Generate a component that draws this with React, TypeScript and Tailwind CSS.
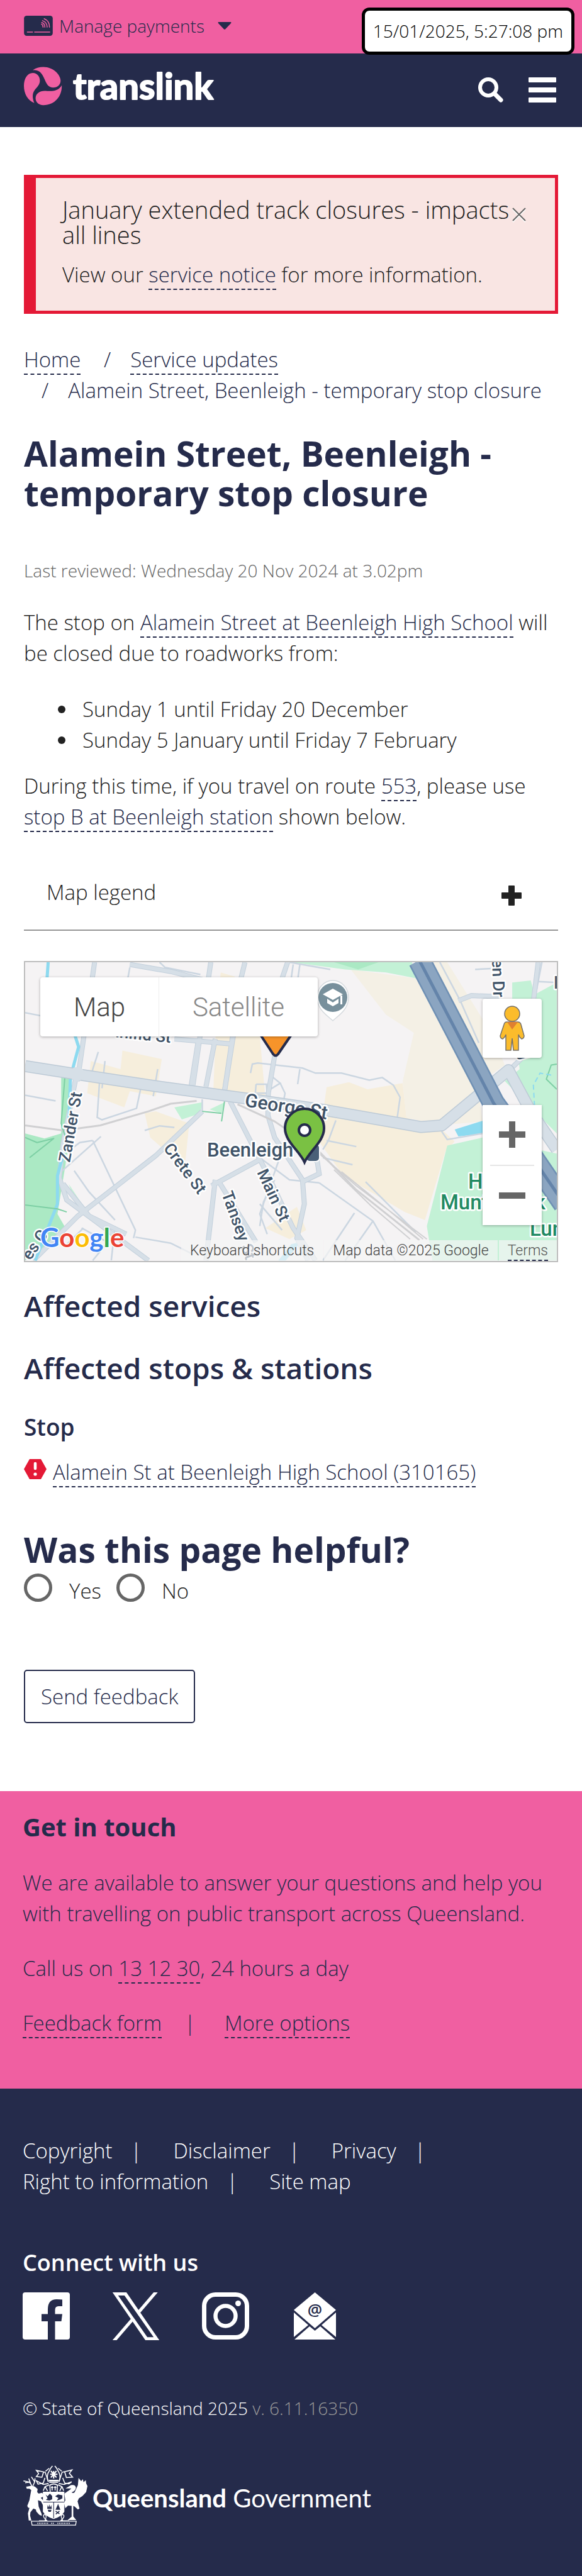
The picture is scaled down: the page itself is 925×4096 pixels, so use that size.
import type { ReactNode } from 'react'

const link = 'border-b-2 border-dashed border-[#252b4b] text-[#252b4b]'

function A({ children }: { children: ReactNode }) {
  return (
    <a href="#" className={link}>
      {children}
    </a>
  )
}

function TranslinkLogo() {
  return (
    <svg viewBox="0 0 330 62" className="h-[62px] w-[330px] overflow-visible" role="img" aria-label="translink">
      <g transform="scale(0.2615) translate(-54 -348)" fill="#f05fa1">
        <path d="M108 369C125 357 147 350 172 350C235 350 277 400 277 433C277 458 258 475 232 475C205 475 193 455 183 432C170 400 155 370 120 369Z" />
        <path d="M117 569C80 555 54 515 54 465C54 420 75 386 108 386C135 386 151 408 151 432C151 455 138 468 122 487C105 508 103 535 117 569Z" />
        <path d="M284 461C287 530 240 582 172 582C143 582 125 562 125 540C125 512 150 495 180 495C210 496 260 505 284 461Z" />
      </g>
      <text
        x="78"
        y="52"
        className="font-['Lato'] text-[58px] font-bold"
        fill="#fff"
        stroke="#fff"
        strokeWidth="2"
        strokeLinejoin="round"
      >
        translink
      </text>
    </svg>
  )
}

function CardIcon() {
  return (
    <svg viewBox="0 0 174 122" className="h-8 w-[46px]" aria-hidden="true">
      <rect width="174" height="122" rx="16" fill="#252b4b" />
      <g stroke="#f05fa1" strokeWidth="6" fill="none" strokeLinecap="round">
        <path d="M20 99H52M64 99H156" />
        <path d="M106 51Q116 56 115 69M107 41Q127 48 126 69M112 30Q140 40 140 69M122 18Q156 32 154 69" />
      </g>
    </svg>
  )
}

const lanes = [
  '68,300 110,315', '68,710 150,738', '430,49 445,75 540,110', '350,75 345,125', '780,49 890,85',
  '790,60 785,125', '808,60 803,125', '265,495 245,610', '283,540 275,675', '425,580 413,715',
  '268,650 262,820 275,832 368,775 380,670', '675,600 680,555 695,550 815,575 850,600 920,600 995,635 1030,622 1060,660 1078,720 1070,825',
  '808,580 802,655', '690,655 718,655 720,700 688,700 690,655', '720,690 755,650 735,620', '755,650 768,700 762,760',
  '390,885 430,862 470,870', '250,935 365,1380 360,1420', '250,935 215,945 190,980', '272,915 165,1090',
  '200,1085 240,1190 310,1330', '905,835 885,935 870,980', '880,935 960,965', '870,1020 950,1055',
  '860,1145 1005,1335 1065,1531', '955,1295 870,1531', '1005,1335 930,1531', '700,1020 780,1130 860,1145',
  '750,1040 700,1300 720,1400', '740,1130 710,1240 700,1360', '700,1250 760,1380', '365,1415 460,1445 520,1500',
  '220,1370 290,1440 250,1531', '225,1370 175,1460', '310,1360 300,1531', '1185,49 1240,240 1290,450',
  '1280,85 1325,80', '1190,890 1205,930 1300,900', '1270,500 1290,560', '985,1140 1120,1390',
  '545,730 545,790', '1440,240 1460,49', '1450,145 1500,150',
]

const streets = [
  '255,49 215,560 208,640', '350,60 460,95 545,135', '568,49 520,660', '660,49 650,125 605,690', '630,400 605,690',
  '775,49 760,130', '535,430 515,665', '580,430 555,668', '740,515 723,700 722,810 740,920 815,1130 820,1250 800,1420 830,1531',
  '470,430 625,455', '620,740 720,1100 790,1370 850,1531', '545,790 420,1010 210,1310 90,1531',
  '570,1160 700,1030', '590,1140 690,1440', '580,1130 555,1531', '205,620 170,950 160,1120 180,1230 400,1531',
  '170,1150 240,1310 340,1400', '815,1140 860,1100 855,1040 800,960', '1235,240 1270,215 1345,220',
  '1370,590 1420,500 1450,49',
]

function MapDrawing() {
  return (
    <svg
      viewBox="0 0 845 475"
      preserveAspectRatio="xMinYMin slice"
      className="absolute inset-0 h-full w-full"
      role="img"
      aria-label="Map of Beenleigh"
    >
      <rect width="845" height="475" fill="#f5f3f4" />
      <g transform="scale(0.59 0.32) translate(-68 -49)">
        <g fill="#f6eedc">
          <path d="M945 85L1125 130L1290 700L1300 840L1180 860L1095 820L1085 640L1115 400L1040 310Z" fill="#f4f0e5" />
          <path d="M330 488L436 530L420 715L350 690L335 770L235 700L245 540L325 580Z" />
          <path d="M595 100L632 120L700 415L715 725L575 680L585 250Z" />
          <path d="M880 670L940 645L990 680L1085 650L1095 820L1190 880L1225 940L1200 990L1145 1330L1090 1290L925 1110L860 940Z" />
          <path d="M390 800L420 790L510 850L500 1030L475 1045L430 960L405 920Z" />
          <path d="M715 1370L800 1265L825 1380L780 1425Z" />
          <path d="M1165 49L1205 49L1330 420L1360 560L1290 650L1200 300Z" fill="#f4f0e5" />
        </g>
        <g fill="#c3f1d6">
          <path d="M785 49H1110L1125 130L1040 100L930 85Z" />
          <path d="M1380 150L1430 140L1440 210L1500 150V1531H1165L1150 1360L1205 960L1300 920L1500 1000V900L1360 640L1400 580L1380 300Z" />
          <path d="M165 620L190 610L185 960L155 1300L180 1380L68 1531V900L120 925L165 900Z" fill="#abe9c4" />
          <path d="M470 770L545 745L540 800L490 830ZM565 780L605 745L597 800Z" />
          <path d="M185 1150L235 1290L215 1300Z" />
        </g>
        <path d="M900 49H1020L965 85Z" fill="#abe9c4" />
        <path d="M1225 880L1330 820L1350 890L1235 915Z" fill="#8ddaf0" />
        <path d="M785 1450L810 1440L770 1531H750Z" fill="#8ddaf0" />

        <g fill="none" stroke="#cbd6e1" strokeWidth="2.5">
          {lanes.map((p) => (
            <polyline key={p} points={p} vectorEffect="non-scaling-stroke" />
          ))}
        </g>
        <g fill="none" stroke="#c3d0dc" strokeWidth="8">
          {streets.map((p) => (
            <polyline key={p} points={p} vectorEffect="non-scaling-stroke" />
          ))}
        </g>
        <g fill="none" stroke="#d6dfe7" strokeWidth="6">
          {streets.map((p) => (
            <polyline key={p} points={p} vectorEffect="non-scaling-stroke" />
          ))}
        </g>
        <g fill="none" strokeLinejoin="round">
          <path d="M130 49L125 180M200 400L212 470L190 620L185 900L155 1110V1250L95 1531" stroke="#8ddaf0" strokeWidth="5" vectorEffect="non-scaling-stroke" />
          <path d="M68 860L170 885L270 860L400 790L460 752L530 738" stroke="#d0d0d2" strokeWidth="3" vectorEffect="non-scaling-stroke" />
          <path d="M640 755L740 840L860 990L960 1180L1130 1430" stroke="#d0d0d2" strokeWidth="3" vectorEffect="non-scaling-stroke" />
          <path d="M860 1000L960 1160L1150 1425M900 1080L1000 1260L1105 1425M920 1090L1040 1270L1140 1425" stroke="#d0d0d2" strokeWidth="2" vectorEffect="non-scaling-stroke" />
          <path d="M175 620L165 850L180 940M68 920L100 945L145 925L80 1020M68 1255L155 1275L180 1290" stroke="#7dcfa4" strokeWidth="2" vectorEffect="non-scaling-stroke" />
          <path d="M605 740L597 840M545 790L597 800M1500 555L1485 560L1472 630L1500 680" stroke="#7dcfa4" strokeWidth="2" vectorEffect="non-scaling-stroke" />
          <path d="M1485 610L1455 600L1437 660L1440 760L1500 960" stroke="#8ddaf0" strokeWidth="2" strokeDasharray="8 5" vectorEffect="non-scaling-stroke" />
          <path d="M68 565L205 605L420 665L660 725L880 785L1135 868L1190 860L1370 585L1430 790L1500 980" stroke="#bdcad6" strokeWidth="19" vectorEffect="non-scaling-stroke" />
          <path d="M68 565L205 605L420 665L660 725L880 785L1135 868L1190 860L1370 585L1430 790L1500 980" stroke="#d6dfe7" strokeWidth="16" vectorEffect="non-scaling-stroke" />
          <path d="M1130 40L1240 430L1330 750L1420 980L1520 1250" stroke="#6f90b4" strokeWidth="36" vectorEffect="non-scaling-stroke" />
          <path d="M1130 40L1240 430L1330 750L1420 980L1520 1250" stroke="#8ba5c1" strokeWidth="31" vectorEffect="non-scaling-stroke" />
          <path d="M1130 40L1240 430L1330 750L1420 980L1520 1250" stroke="#6484aa" strokeWidth="5" vectorEffect="non-scaling-stroke" />
        </g>
        <ellipse cx="208" cy="604" rx="20" ry="34" fill="#d6dfe7" />
      </g>

      <g
        className="font-['Roboto'] text-[26px] font-medium"
        fill="#3f5368"
        stroke="#fff"
        strokeWidth="5"
        strokeLinejoin="round"
        paintOrder="stroke"
      >
        <text x="143" y="119" transform="rotate(6 143 119)">inifid St</text>
        <text transform="translate(71 319) rotate(-80)">Zander St</text>
        <text transform="translate(348 229) rotate(9)" className="text-[30px]">George St</text>
        <text transform="translate(219 296) rotate(53)">Crete St</text>
        <text transform="translate(368 334) rotate(65)">Main St</text>
        <text transform="translate(312 368) rotate(70)">Tansey St</text>
        <text transform="translate(742 -5) rotate(88)">en Dr</text>
        <text transform="translate(785 147) rotate(55)">y</text>
        <text transform="translate(8 475) rotate(-55)">es C</text>
        <text x="289" y="309" className="text-[31px]">Beenleigh</text>
        <text x="840" y="42" className="text-[28px]">P</text>
        <g fill="#218a63" className="text-[33px]">
          <text x="704" y="360">H</text>
          <text x="660" y="393">Munt</text>
          <text x="798" y="393">rk</text>
          <text x="802" y="435">Lunc</text>
        </g>
      </g>

      <path d="M373 114H424L402 146Q398 151 394 146Z" fill="#f7942a" stroke="#252b4b" strokeWidth="4" strokeLinejoin="round" />
      <path d="M489 93C482 86 464 76 464 56A25 27 0 0 1 514 56C514 76 496 86 489 93Z" fill="#fff" stroke="#d5dade" strokeWidth="1.5" />
      <circle cx="489" cy="56" r="23" fill="#78909c" />
      <path d="M489 42L505 51L489 60L473 51ZM480 58L489 64L498 58V65L489 70L480 65ZM501 53H504V67H501Z" fill="#fff" />
      <rect x="446" y="289" width="22" height="28" rx="6" fill="#4a6078" stroke="#fff" strokeWidth="2" />
      <path
        d="M444 318C436 300 413 285 413 264A31 31 0 0 1 475 264C475 285 452 300 444 318Z"
        fill="#7ac143"
        stroke="#252b4b"
        strokeWidth="4"
      />
      <circle cx="444" cy="267" r="9" fill="#fff" stroke="#252b4b" strokeWidth="4" />

      <text
        x="24"
        y="453"
        className="font-['Lato'] text-[42px] font-bold"
        stroke="#fff"
        strokeWidth="3"
        strokeLinejoin="round"
        paintOrder="stroke"
      >
        <tspan fill="#4285f4">G</tspan>
        <tspan fill="#ea4335">o</tspan>
        <tspan fill="#fbbc04">o</tspan>
        <tspan fill="#4285f4">g</tspan>
        <tspan fill="#34a853">l</tspan>
        <tspan fill="#ea4335">e</tspan>
      </text>
    </svg>
  )
}

function Pegman() {
  return (
    <svg viewBox="0 0 46 72" className="h-[72px] w-[46px]" aria-hidden="true">
      <path
        d="M14 26Q11 26 10 30L4 48Q4 52 8 53L11 50L13 46V71H21L23 52L25 71H33V46L35 50L38 53Q42 52 42 48L37 30Q36 26 32 26Z"
        fill="#fbbc2c"
        stroke="#75706a"
        strokeWidth="1.5"
      />
      <path d="M15 26H32L23 38Z" fill="#e08030" />
      <circle cx="23" cy="13" r="12" fill="#fbbc2c" stroke="#75706a" strokeWidth="1.5" />
    </svg>
  )
}

function AffectedMap() {
  const card = 'bg-white shadow-[0_1px_4px_rgba(0,0,0,0.3)]'
  return (
    <section className="relative mt-12 h-[479px] overflow-hidden border-2 border-[#bdbdbd]">
      <MapDrawing />
      <div className={`absolute left-6 top-6 flex h-[94px] rounded-[4px] font-['Roboto'] text-[42px] font-light ${card}`}>
        <button className="w-[189px] border-r border-[#eee] text-[#444]">Map</button>
        <button className="w-[252px] text-[#888]">Satellite</button>
      </div>
      <button
        aria-label="Street View"
        className={`absolute right-6 top-[58px] flex size-[94px] items-center justify-center rounded-[4px] ${card}`}
      >
        <Pegman />
      </button>
      <div className={`absolute bottom-[57px] right-6 flex h-[191px] w-[94px] flex-col items-center ${card}`}>
        <button aria-label="Zoom in" className="flex w-full flex-1 items-center justify-center">
          <svg viewBox="0 0 42 42" className="size-[42px]" fill="#666">
            <path d="M16 0h10v16h16v10H26v16H16V26H0V16h16z" />
          </svg>
        </button>
        <span className="h-0.5 w-[70px] bg-[#e6e6e6]" />
        <button aria-label="Zoom out" className="flex w-full flex-1 items-center justify-center">
          <svg viewBox="0 0 42 10" className="h-2.5 w-[42px]" fill="#666">
            <path d="M0 0h42v10H0z" />
          </svg>
        </button>
      </div>
      <div className="absolute bottom-0 right-0 flex h-[33px] gap-0.5 font-['Roboto'] text-[23px] font-light leading-[33px] text-[#444]">
        <button className="bg-[#f5f5f5]/70 px-[14px]">Keyboard shortcuts</button>
        <span className="bg-[#f5f5f5]/70 px-[14px]">Map data ©2025 Google</span>
        <span className="bg-[#f5f5f5]/70 px-[14px]">
          <a href="#" className="inline-block h-[33px] border-b-2 border-dashed border-[#252b4b] text-[#555]">
            Terms
          </a>
        </span>
      </div>
    </section>
  )
}

function Crest() {
  return (
    <svg viewBox="25 50 393 366" className="h-24 w-[103px] shrink-0" fill="#fff" aria-hidden="true">
      <path d="M46 180L68 176L80 172L100 180L116 194L113 212L122 222L140 217L150 222V240L135 247L148 262L158 282L152 300L136 268L118 262L122 300L140 345L141 356L126 350L108 330L105 318L90 312L72 335L70 355L78 385H62L57 342L66 308L58 306L53 296L66 262L77 200L66 192H50Z" />
      <path d="M80 172L66 152L30 144M66 152L40 156M74 162L62 130M88 174L98 150L78 120M98 150L100 128" fill="none" stroke="#fff" strokeWidth="6" />
      <path d="M285 190L318 170Q345 166 348 186Q346 204 322 214Q330 222 340 214L360 170L364 126L380 146L390 134L394 152L408 140L410 160L418 176L410 212L388 236L366 250L358 268L370 312L360 318L340 300L332 296V360L350 382H298L322 362V296L300 294L284 310L276 280L284 262L278 222L312 198L320 190Z" />
      <path d="M150 212H276V330Q262 358 213 373Q164 358 150 330Z" stroke="#fff" strokeWidth="4" />
      <path d="M150 273H276M213 273V370" stroke="#252b4b" strokeWidth="4" />
      <path d="M164 226L176 238L190 222L204 236V256L188 264L166 260L176 250ZM222 238L240 226L266 232V250L252 258L232 264L242 248ZM176 290L182 306L186 286L192 306L198 290L202 314H174ZM177 320H200L196 332H182ZM240 284L254 320H224Z" fill="#252b4b" />
      <path d="M225 328L248 344M248 328L226 346" stroke="#252b4b" strokeWidth="6" />
      <g fill="none" stroke="#fff" strokeWidth="6">
        <path d="M192 210L190 170Q213 156 236 170L234 210M204 176V202M222 176V202M197 184H211M215 184H229" />
        <path d="M186 152H240M184 142H242M196 84L230 124M230 84L196 124M213 84V130M192 104H236" strokeWidth="8" />
        <path d="M182 150Q170 130 178 100L196 66L206 54M244 150Q256 130 248 100L230 66L220 54M164 86L186 68M262 86L240 68" />
        <path d="M180 148L162 92L108 80L122 100L108 118L142 122L152 90M246 148L264 92L324 78L308 98L328 122L290 124L280 90" />
        <path d="M182 160L150 166L108 144L118 164L150 158L160 126M244 160L276 166L322 150L306 162L280 158L268 126" />
        <path d="M186 168L160 180L150 204M240 168L264 180L274 204M162 180L176 206M262 180L250 206" />
        <path d="M124 386L172 386Q140 356 158 348Q176 352 160 386L144 386M308 386L256 386Q288 356 268 348Q250 352 268 386" strokeWidth="5" />
        <path d="M78 389H350L346 413H82Z" strokeWidth="5" />
        <path d="M114 402H180M198 402H218M236 402H316" strokeWidth="8" strokeDasharray="5 5" />
      </g>
    </svg>
  )
}

function MailIcon() {
  return (
    <svg viewBox="0 0 75 75" className="size-[75px]" aria-hidden="true">
      <path d="M37.5 0L71 28L37.5 57L4 28Z" fill="#fff" />
      <path d="M4 32V71L27 52ZM71 32V71L48 52ZM5 75H70L46 54L37.5 61L29 54Z" fill="#fff" />
      <text x="37.5" y="37" textAnchor="middle" className="font-['Open_Sans'] text-[26px] font-semibold" fill="#252b4b">
        @
      </text>
    </svg>
  )
}

const footerLinks = ['Copyright', 'Disclaimer', 'Privacy', 'Right to information', 'Site map']

export default function App() {
  return (
    <div className="relative w-full bg-white font-['Open_Sans',sans-serif] text-[33px] font-light leading-[49px] text-[#222]">
      <time className="absolute right-3 top-3 z-10 h-[75px] rounded-[12px] border-[5px] border-black bg-white px-[13px] text-[28px] leading-[64px] text-black">
        15/01/2025, 5:27:08 pm
      </time>

      <div className="flex h-[85px] items-start bg-[#f05fa1] pl-[38px] pt-[22px]">
        <button className="flex items-center text-[28px] leading-[38px] text-[#252b4b]">
          <CardIcon />
          <span className="ml-2.5 mr-[21px]">Manage payments</span>
          <svg viewBox="0 0 22 12" className="h-3 w-[22px]" fill="#252b4b">
            <path d="M1 0H21Q22 1 21 2L12 11.500Q11 12 10 11.500L1 2Q0 1 1 0Z" />
          </svg>
        </button>
      </div>

      <header className="flex h-[117px] items-center justify-between bg-[#252b4b] pb-[13px] pl-[38px] pr-[41px]">
        <a href="#">
          <TranslinkLogo />
        </a>
        <div className="flex items-center gap-10 pt-3">
          <button aria-label="Search">
            <svg viewBox="0 0 40 40" className="size-10" fill="none" stroke="#fff" strokeLinecap="round">
              <circle cx="16" cy="16" r="13" strokeWidth="6" />
              <path d="M27 27L36 36" strokeWidth="7" />
            </svg>
          </button>
          <button aria-label="Menu" className="flex w-11 flex-col gap-2">
            <span className="h-2 rounded-[1px] bg-white" />
            <span className="h-2 rounded-[1px] bg-white" />
            <span className="h-2 rounded-[1px] bg-white" />
          </button>
        </div>
      </header>

      <main className="px-[38px] pb-[108px] pt-[76px]">
        <div
          role="alert"
          className="flex items-start justify-between border-[5px] border-l-[19px] border-[#e41936] bg-[#f9e5e3] pb-[33px] pl-[42px] pr-[46px] pt-[30px]"
        >
          <div>
            <h2 className="text-[38px] leading-10">January extended track closures - impacts all lines</h2>
            <p className="mt-[19px]">
              View our <A>service notice</A> for more information.
            </p>
          </div>
          <button aria-label="Close" className="mt-[17px] shrink-0">
            <svg viewBox="0 0 22 24" className="h-6 w-[22px]" fill="none" strokeWidth="2">
              <path d="M1 3L21 23M21 3L1 23" stroke="#fff" />
              <path d="M1 1L21 21M21 1L1 21" stroke="#666" />
            </svg>
          </button>
        </div>

        <nav aria-label="Breadcrumb" className="mt-12 text-[#252b4b]">
          <ol>
            <li className="inline-block">
              <A>Home</A>
            </li>{' '}
            <li className="inline-block">
              <span className="pl-7 pr-[31px]">/</span>
              <A>Service updates</A>
            </li>{' '}
            <li className="inline-block">
              <span className="pl-7 pr-[31px]">/</span>
              Alamein Street, Beenleigh - temporary stop closure
            </li>
          </ol>
        </nav>

        <h1 className="mt-11 text-[55px] font-bold leading-[63px] text-[#252b4b]">
          Alamein Street, Beenleigh - temporary stop closure
        </h1>
        <p className="mt-[71px] text-[28px] leading-[42px] text-[#666]">
          Last reviewed: Wednesday 20 Nov 2024 at 3.02pm
        </p>
        <p className="mt-[37px]">
          The stop on <A>Alamein Street at Beenleigh High School</A> will be closed due to roadworks from:
        </p>
        <ul className="mt-10">
          {['Sunday 1 until Friday 20 December', 'Sunday 5 January until Friday 7 February'].map((t) => (
            <li key={t} className="flex items-center gap-[27px] pl-[54px]">
              <span className="size-3 rounded-full bg-[#222]" />
              {t}
            </li>
          ))}
        </ul>
        <p className="mt-6">
          During this time, if you travel on route <A>553</A>, please use <A>stop B at Beenleigh station</A> shown below.
        </p>

        <button className="mt-[71px] flex w-full items-center justify-between border-b-2 border-[#969696] pb-[35px] pl-9 pr-[58px]">
          Map legend
          <svg viewBox="0 0 32 32" className="mt-2.5 size-8" fill="#222">
            <path d="M12 0h8q1 0 1 1v10h10q1 0 1 1v8q0 1-1 1H21v10q0 1-1 1h-8q-1 0-1-1V21H1q-1 0-1-1v-8q0-1 1-1h10V1q0-1 1-1z" />
          </svg>
        </button>

        <AffectedMap />

        <h2 className="mt-[42px] text-[46px] font-semibold leading-[54px] text-[#252b4b]">Affected services</h2>
        <h2 className="mt-[45px] text-[46px] font-semibold leading-[54px] text-[#252b4b]">Affected stops &amp; stations</h2>
        <h3 className="mt-[45px] text-[37px] font-semibold leading-[43px] text-[#252b4b]">Stop</h3>
        <p className="mt-[26px] flex items-start gap-2.5">
          <svg viewBox="0 0 36 32" className="mt-1 h-8 w-9 shrink-0" aria-hidden="true">
            <path d="M9 0H27L36 16L27 32H9L0 16Z" fill="#e41936" />
            <path d="M18 7V15" stroke="#fff" strokeWidth="4.500" strokeLinecap="round" />
            <circle cx="18" cy="24" r="2.600" fill="#fff" />
          </svg>
          <span>
            <A>Alamein St at Beenleigh High School (310165)</A>
          </span>
        </p>

        <form onSubmit={(e) => e.preventDefault()}>
          <fieldset>
            <legend className="pt-[67px] text-[55px] font-bold leading-[63px] text-[#252b4b]">Was this page helpful?</legend>
            <div className="mt-[7px] flex items-start gap-6">
              {['Yes', 'No'].map((v) => (
                <label key={v} className="flex items-start gap-[27px]">
                  <input type="radio" name="helpful" className="size-[45px] appearance-none rounded-full border-[5px] border-[#666] bg-white" />
                  <span className="pt-[3px]">{v}</span>
                </label>
              ))}
            </div>
          </fieldset>
          <button className="mt-[101px] h-[85px] rounded-[5px] border-2 border-[#252b4b] px-[25px] text-[#252b4b]">
            Send feedback
          </button>
        </form>
      </main>

      <section className="bg-[#f05fa1] px-9 pb-20 pt-8 text-[#252b4b]">
        <h2 className="text-[40px] font-bold">Get in touch</h2>
        <p className="mt-10">
          We are available to answer your questions and help you with travelling on public transport across Queensland.
        </p>
        <p className="mt-[38px]">
          Call us on <A>13 12 30</A>, 24 hours a day
        </p>
        <p className="mt-[38px]">
          <A>Feedback form</A>
          <span className="pl-[36px] pr-[46px]">|</span>
          <A>More options</A>
        </p>
      </section>

      <footer className="bg-[#252b4b] px-9 pb-20 pt-[74px] text-white">
        <ul className="max-w-[720px]">
          {footerLinks.map((t, i) => (
            <li key={t} className="inline-block">
              <a href="#">{t}</a>
              {i < footerLinks.length - 1 && <span className="pl-[29px] pr-[50px]">|</span>}
            </li>
          ))}
        </ul>
        <h2 className="mt-[83px] text-[36px] font-semibold leading-[43px]">Connect with us</h2>
        <div className="mt-[26px] flex gap-[67px]">
          <a href="#" aria-label="Facebook">
            <svg viewBox="0 0 75 75" className="size-[75px]">
              <rect width="75" height="75" rx="4" fill="#fff" />
              <path d="M40 75V46H30V34.500H40V27Q40 11 54 11Q60 11 63 11.500V22H57Q51.500 22 51.500 28V34.500H63L61.500 46H51.500V75Z" fill="#252b4b" />
            </svg>
          </a>
          <a href="#" aria-label="X">
            <svg viewBox="0 0 1200 1227" className="size-[76px]" fill="#fff">
              <path d="M714.163 519.284L1160.89 0H1055.03L667.137 450.887L357.328 0H0L468.492 681.821L0 1226.37H105.866L515.491 750.218L842.672 1226.37H1200L714.137 519.284H714.163ZM569.165 687.828L521.697 619.934L144.011 79.6944H306.615L611.412 515.685L658.88 583.579L1055.08 1150.3H892.476L569.165 687.854V687.828Z" />
            </svg>
          </a>
          <a href="#" aria-label="Instagram">
            <svg viewBox="0 0 75 75" className="size-[75px]" fill="none" stroke="#fff">
              <rect x="3.500" y="3.500" width="68" height="68" rx="18" strokeWidth="7" />
              <circle cx="37.500" cy="37.500" r="16" strokeWidth="6.500" />
              <circle cx="57.500" cy="17.500" r="4.500" fill="#fff" stroke="none" />
            </svg>
          </a>
          <a href="#" aria-label="Email">
            <MailIcon />
          </a>
        </div>
        <p className="mt-[87px] text-[28px] leading-[42px]">
          © State of Queensland 2025 <span className="text-[#999]">v. 6.11.16350</span>
        </p>
        <a href="#" className="mt-[70px] flex h-24 items-center gap-2 text-[40px]">
          <Crest />
          <span className="pt-2 font-['Lato'] font-normal">
            <b className="font-bold">Queensland</b> Government
          </span>
        </a>
      </footer>
    </div>
  )
}
